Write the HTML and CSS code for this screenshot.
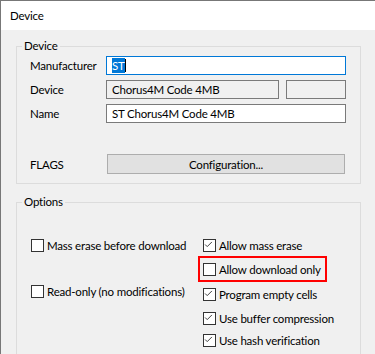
FILE: index.html
```html
<!DOCTYPE html>
<html lang="en">
<head>
  <meta charset="UTF-8">
  <meta name="viewport" content="width=device-width, initial-scale=1.0">
  <title>Device</title>
  <link rel="stylesheet" href="styles.css">
</head>
<body>
  <div class="window">
    <div class="titlebar">Device</div>

    <div class="content">
      <fieldset class="group device-group">
        <legend>Device</legend>
        <div class="group-body">
          <div class="form-grid">
            <label class="field-label">Manufacturer</label>
            <div class="textbox focused"><span class="selected">ST</span><span class="caret"></span></div>

            <label class="field-label">Device</label>
            <div class="split">
              <div class="textbox readonly">Chorus4M Code 4MB</div>
              <div class="textbox readonly small"></div>
            </div>

            <label class="field-label">Name</label>
            <div class="textbox">ST Chorus4M Code 4MB</div>
          </div>

          <div class="flags-row">
            <span class="field-label">FLAGS</span>
            <button class="btn">Configuration...</button>
          </div>
        </div>
      </fieldset>

      <fieldset class="group options-group">
        <legend>Options</legend>
        <div class="options">
          <div class="check-list left">
            <div class="check"><span class="box"></span>Mass erase before download</div>
            <div class="check gap-big"><span class="box"></span>Read-only (no modifications)</div>
          </div>
          <div class="check-list right">
            <div class="check"><span class="box"><svg viewBox="0 0 13 13"><path d="M2.5 6.5 L5 9 L10.5 3.5" /></svg></span>Allow mass erase</div>
            <div class="check highlight"><span class="box"></span>Allow download only</div>
            <div class="check"><span class="box"><svg viewBox="0 0 13 13"><path d="M2.5 6.5 L5 9 L10.5 3.5" /></svg></span>Program empty cells</div>
            <div class="check"><span class="box"><svg viewBox="0 0 13 13"><path d="M2.5 6.5 L5 9 L10.5 3.5" /></svg></span>Use buffer compression</div>
            <div class="check tight"><span class="box"><svg viewBox="0 0 13 13"><path d="M2.5 6.5 L5 9 L10.5 3.5" /></svg></span>Use hash verification</div>
          </div>
        </div>
      </fieldset>
    </div>
  </div>
</body>
</html>
```

FILE: styles.css
```css
body {
  margin: 0;
  background-color: #f0f0f0;
  font-family: "Segoe UI", Lato, "Liberation Sans", sans-serif;
  font-size: 11.5px;
  letter-spacing: -0.2px;
  color: #000;
  overflow: hidden;
}
.window {
  height: 353px;
  border-top: 1px solid #777;
  border-left: 1px solid #777;
}
.titlebar {
  background-color: #fff;
  height: 29px;
  line-height: 29px;
  padding-left: 9px;
}
.content {
  padding: 0 14px 0 15px;
}
.group {
  margin: 0;
  border: 1px solid #dcdcdc;
  padding: 0;
  min-width: 0;
}
.group legend {
  padding: 0 2px;
  margin-left: 5px;
  line-height: 18px;
}
.device-group {
  margin-top: 7px;
}
.group-body {
  padding: 1px 14px 9px 13px;
}
.form-grid {
  display: grid;
  grid-template-columns: 76px 240px;
  row-gap: 5px;
  align-items: center;
}
.field-label {
  line-height: 19px;
}
.textbox {
  box-sizing: border-box;
  height: 19px;
  line-height: 17px;
  padding: 0 5px;
  border: 1px solid #7a7a7a;
  background-color: #fff;
  white-space: nowrap;
  overflow: hidden;
}
.textbox.focused {
  border-color: #0078d7;
}
.textbox.readonly {
  background-color: #f0f0f0;
}
.split {
  display: flex;
  gap: 7px;
}
.split .textbox {
  flex: 1;
}
.split .textbox.small {
  flex: 0 0 60px;
}
.selected {
  background-color: #0078d7;
  color: #fff;
  padding: 1px 0;
}
.caret {
  display: inline-block;
  width: 1px;
  height: 13px;
  background-color: #000;
  vertical-align: -2px;
}
.flags-row {
  display: flex;
  align-items: center;
  margin-top: 31px;
}
.flags-row .field-label {
  width: 77px;
}
.btn {
  width: 238px;
  height: 20px;
  padding: 0;
  border: 1px solid #adadad;
  background-color: #e1e1e1;
  font: inherit;
  letter-spacing: inherit;
  color: #000;
}
.options-group {
  margin-top: 9px;
  height: 160px;
}
.options {
  display: flex;
  padding: 26px 0 0 14px;
}
.check-list {
  display: flex;
  flex-direction: column;
  gap: 8.5px;
}
.check-list.left {
  width: 172px;
}
.check {
  position: relative;
  display: flex;
  align-items: center;
  gap: 3px;
  height: 16px;
  white-space: nowrap;
}
.check .box {
  box-sizing: border-box;
  width: 13px;
  height: 13px;
  border: 1px solid #333;
  background-color: #fff;
  flex: none;
}
.check .box svg {
  display: block;
  width: 11px;
  height: 11px;
  margin: -1px 0 0 -1px;
  overflow: visible;
}
.check .box path {
  fill: none;
  stroke: #333;
  stroke-width: 1.1;
}
.check.gap-big {
  margin-top: 22px;
}
.check.tight {
  margin-top: -3px;
}
.check.highlight::after {
  content: "";
  position: absolute;
  left: -5px;
  top: -6px;
  width: 129px;
  height: 26px;
  box-sizing: border-box;
  border: 2px solid #f00;
}
```
